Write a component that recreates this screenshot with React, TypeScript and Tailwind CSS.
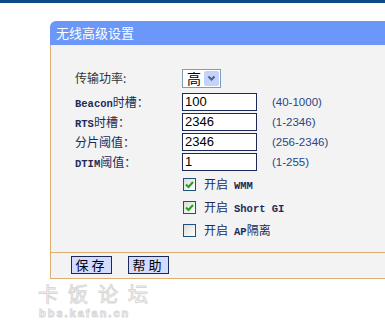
import React from "react";

const cjk = '"Noto Sans CJK SC", "Liberation Sans", sans-serif';
const mono = '"Liberation Mono", "Noto Sans CJK SC", monospace';

function Label({ children }: { children: React.ReactNode }) {
  return (
    <div className="w-[107px] text-[12px] leading-[20px] text-[#1e2b5a]" style={{ fontFamily: cjk }}>
      {children}
    </div>
  );
}

function Lat({ children, gap }: { children: React.ReactNode; gap?: boolean }) {
  return (
    <span className={gap ? "ml-[6px] text-[10.5px] font-semibold" : "text-[10.5px] font-semibold"} style={{ fontFamily: mono }}>
      {children}
    </span>
  );
}

function InputRow({ label, value, range }: { label: React.ReactNode; value: string; range: string }) {
  return (
    <div className="flex h-[20px] items-start">
      <Label>{label}</Label>
      <div className="mt-[1px] h-[18px] w-[75px] border border-[#1c2a5a] bg-white pl-[2px] text-[13px] leading-[16px] text-black" style={{ fontFamily: '"Liberation Sans", sans-serif' }}>
        {value}
      </div>
      <div className="ml-[15px] mt-[1px] text-[11.5px] leading-[18px] text-[#2a4585]" style={{ fontFamily: '"Liberation Sans", sans-serif' }}>
        {range}
      </div>
    </div>
  );
}

function Check({ checked, children }: { checked: boolean; children: React.ReactNode }) {
  return (
    <div className="flex h-[23px] items-center pl-[107px]">
      <div className="ml-[1px] flex h-[13px] w-[13px] items-center justify-center border border-[#1c5180] bg-gradient-to-br from-[#dcdcd7] to-white">
        {checked && (
          <svg width="9" height="9" viewBox="0 0 9 9">
            <path d="M1 4.5 L3.5 7 L8 2" fill="none" stroke="#21a121" strokeWidth="2" />
          </svg>
        )}
      </div>
      <div className="ml-[8px] text-[12px] text-[#1e2b5a]" style={{ fontFamily: cjk }}>
        {children}
      </div>
    </div>
  );
}

export default function App() {
  return (
    <div className="relative h-[332px] w-[385px] overflow-hidden bg-white">
      <div className="h-[3px] bg-[#0d4a8a]" />
      <div className="ml-[50px] mt-[18px] w-[360px]">
        <div
          className="h-[24px] rounded-tl-[6px] bg-[#6a97f8] pl-[6px] text-[13px] leading-[24px] text-white"
          style={{ fontFamily: cjk }}
        >
          无线高级设置
        </div>
        <div className="h-[208px] border-b border-l border-[#dcae72] bg-[#f3f3f3] pl-[24px] pt-[23px]">
          <div className="flex h-[21px] items-start">
            <Label>
              <span className="text-[#333]">传输功率:</span>
            </Label>
            <div className="mt-[1px] flex h-[19px] w-[39px] items-center border border-[#7f9db9] bg-white">
              <span className="ml-[4px] text-[14px] leading-[17px] text-black" style={{ fontFamily: cjk }}>
                高
              </span>
              <div className="ml-auto mr-[1px] flex h-[15px] w-[15px] items-center justify-center rounded-[2px] bg-[#c3d3fb]">
                <svg width="9" height="7" viewBox="0 0 9 7">
                  <path d="M1.5 1.5 L4.5 4.5 L7.5 1.5" fill="none" stroke="#4d6185" strokeWidth="2" />
                </svg>
              </div>
            </div>
          </div>
          <div className="mt-[3px]">
            <InputRow label={<><Lat>Beacon</Lat>时槽：</>} value="100" range="(40-1000)" />
            <InputRow label={<><Lat>RTS</Lat>时槽：</>} value="2346" range="(1-2346)" />
            <InputRow label={<>分片阈值：</>} value="2346" range="(256-2346)" />
            <InputRow label={<><Lat>DTIM</Lat>阈值：</>} value="1" range="(1-255)" />
          </div>
          <div className="mt-[1px]">
            <Check checked>
              开启<Lat gap>WMM</Lat>
            </Check>
            <Check checked>
              开启<Lat gap>Short GI</Lat>
            </Check>
            <Check checked={false}>
              开启<Lat gap>AP</Lat>隔离
            </Check>
          </div>
        </div>
        <div className="flex h-[26px] items-start gap-[16px] border-b border-l border-[#dcae72] bg-[#f3f3f3] pl-[20px] pt-[3px]">
          <button
            className="h-[18px] w-[41px] border border-[#1c2a5a] bg-[#d3dbff] text-[13px] leading-[16px] tracking-[3px] text-black"
            style={{ fontFamily: cjk }}
          >
            保存
          </button>
          <button
            className="h-[18px] w-[41px] border border-[#1c2a5a] bg-[#d3dbff] text-[13px] leading-[16px] tracking-[3px] text-black"
            style={{ fontFamily: cjk }}
          >
            帮助
          </button>
        </div>
      </div>
      <div className="ml-[38px] mt-[5px] h-[20px] text-[20px] leading-[20px] tracking-[10px] text-white [-webkit-text-stroke:1px_#d8d8d8]" style={{ fontFamily: cjk }}>
        卡饭论坛
      </div>
      <div className="ml-[39px] mt-[3px] h-[12px] text-[11px] font-bold leading-[12px] tracking-[2px] text-white [-webkit-text-stroke:1px_#d8d8d8]" style={{ fontFamily: '"Liberation Sans", sans-serif' }}>
        bbs.kafan.cn
      </div>
    </div>
  );
}
